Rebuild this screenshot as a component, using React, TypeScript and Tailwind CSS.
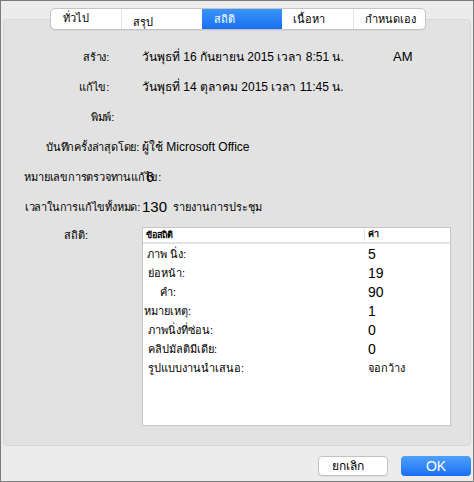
import React from 'react';

const tabs = [
  { label: 'ทั่วไป', w: 'w-[70px]', cls: 'pl-[12px] pt-[1px]' },
  { label: 'สรุป', w: 'w-[81px]', cls: 'pl-[11px] pt-[5px]' },
  { label: 'สถิติ', w: 'w-[80px]', cls: 'pl-[12px] pt-[2px]' },
  { label: 'เนื้อหา', w: 'w-[71px]', cls: 'pl-[11px] pt-[2px]' },
  { label: 'กำหนดเอง', w: 'w-[72px]', cls: 'pl-[11px] pt-[2px]' },
];

const stats = [
  { label: 'ภาพ นิ่ง:', value: '5', pad: 'pl-[4px]' },
  { label: 'ย่อหน้า:', value: '19', pad: 'pl-[5px]' },
  { label: 'คำ:', value: '90', pad: 'pl-[17px]' },
  { label: 'หมายเหตุ:', value: '1', pad: 'pl-[1px]' },
  { label: 'ภาพนิ่งที่ซ่อน:', value: '0', pad: 'pl-[5px]' },
  { label: 'คลิปมัลติมีเดีย:', value: '0', pad: 'pl-[5px]' },
  { label: 'รูปแบบงานนำเสนอ:', value: 'จอกว้าง', pad: 'pl-[5px]' },
];

const InfoRow: React.FC<{ label: string; labelCls: string; children?: React.ReactNode }> = ({ label, labelCls, children }) => (
  <div className="flex items-center h-[30px]">
    <div className={`shrink-0 whitespace-nowrap text-right text-[11px] tracking-[-0.2px] ${labelCls}`}>{label}</div>
    <div className="flex items-center text-[12px] whitespace-nowrap">{children}</div>
  </div>
);

export default function App() {
  return (
    <div
      className="w-[474px] h-[482px] bg-[#ececec] border border-[#7b7b7b] flex flex-col text-black"
      style={{ fontFamily: '"Liberation Sans", "Noto Sans", sans-serif' }}
    >
      {/* tab strip overlaps the panel's top edge */}
      <div className="flex pl-[49px] pt-[7px] relative z-10">
        <div className="flex h-[22px] bg-white border border-[#c4c4c4] rounded-[5px] overflow-hidden shadow-[0_1px_0_rgba(0,0,0,0.05)]">
          {tabs.map((t, i) => (
            <div
              key={t.label}
              className={`${t.w} h-full text-[11px] leading-[16px] whitespace-nowrap ${t.cls} ${
                i === 2
                  ? 'bg-gradient-to-b from-[#3a95fb] to-[#1a6ff3] text-white'
                  : 'text-black'
              } ${i > 0 && i !== 2 && i !== 3 ? 'border-l border-[#e2e2e2]' : ''}`}
            >
              {t.label}
            </div>
          ))}
        </div>
      </div>

      <div className="mx-[2px] -mt-[11px] h-[427px] bg-[#e2e2e2] border border-[#d8d8d8] rounded-[4px] flex flex-col pt-[22px]">
        <InfoRow label="สร้าง:" labelCls="w-[138px] pr-[33px]">
          <span className="w-[251px]">วันพุธที่ 16 กันยายน 2015 เวลา 8:51 น.</span>
          <span className="text-[13px]">AM</span>
        </InfoRow>
        <InfoRow label="แก้ไข:" labelCls="w-[138px] pr-[33px]">
          <span>วันพุธที่ 14 ตุลาคม 2015 เวลา 11:45 น.</span>
        </InfoRow>
        <InfoRow label="พิมพ์:" labelCls="w-[138px] pr-[28px]" />
        <InfoRow label="บันทึกครั้งล่าสุดโดย:" labelCls="w-[138px] pr-[3px]">
          <span>ผู้ใช้ Microsoft Office</span>
        </InfoRow>
        <InfoRow label="หมายเลขการตรวจทานแก้ไข:" labelCls="w-[157px]">
          <span className="-ml-[15px] text-[14px]">6</span>
        </InfoRow>
        <InfoRow label="เวลาในการแก้ไขทั้งหมด:" labelCls="w-[138px] pr-[2px]">
          <span className="text-[15px]">130</span>
          <span className="ml-[6px] text-[11px]">รายงานการประชุม</span>
        </InfoRow>

        <div className="flex mt-[5px]">
          <div className="w-[138px] shrink-0 pl-[60px] text-[11px]">สถิติ:</div>
          <div className="w-[309px] h-[199px] bg-white border border-[#c6c6c6] flex flex-col">
            <div className="flex h-[16px] border-b-2 border-[#e4e4e4] text-[9px] font-bold items-center">
              <div className="w-[222px] pl-[3px] border-r border-[#e4e4e4] h-[12px] leading-[12px]">ข้อสถิติ</div>
              <div className="pl-[3px]">ค่า</div>
            </div>
            <div className="flex flex-col pt-[1px]">
              {stats.map((s) => (
                <div key={s.label} className="flex items-center h-[19px]">
                  <div className={`w-[225px] text-[11px] whitespace-nowrap ${s.pad}`}>{s.label}</div>
                  <div className={s.value.length > 2 ? 'text-[11px]' : 'text-[14px]'}>{s.value}</div>
                </div>
              ))}
            </div>
          </div>
        </div>
      </div>

      <div className="flex justify-end gap-[13px] pr-[2px] pt-[10px]">
        <button className="w-[70px] h-[20px] bg-white border border-[#c2c2c2] rounded-[4px] text-[12px] text-left pl-[13px] shadow-[0_1px_0_rgba(0,0,0,0.06)]">
          ยกเลิก
        </button>
        <button className="w-[70px] h-[20px] rounded-[4px] bg-gradient-to-b from-[#4fa0fb] to-[#1a6ff5] text-white text-[14px] leading-[20px]">
          OK
        </button>
      </div>
    </div>
  );
}
